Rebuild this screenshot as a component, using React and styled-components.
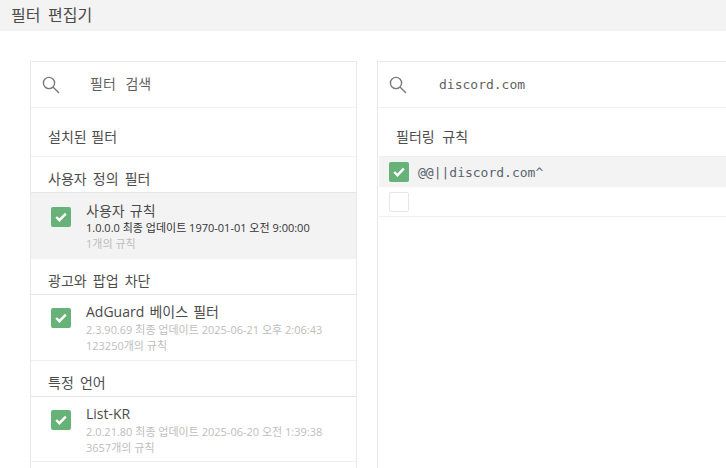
import React from "react";
import styled, { createGlobalStyle } from "styled-components";

const GlobalStyle = createGlobalStyle`
  html, body {
    margin: 0;
    height: 100%;
    overflow: hidden;
    background: #fff;
  }
  body {
    font-family: "Open Sans", "Noto Sans CJK KR", sans-serif;
    color: #4d4d4d;
  }
`;

const Page = styled.div`
  width: 726px;
  height: 468px;
  overflow: hidden;
`;

const Header = styled.div`
  height: 31px;
  background: #f3f3f3;
  padding-left: 11px;
  font-size: 16px;
  line-height: 30px;
  word-spacing: 3.5px;
  color: #4a4a4a;
`;

const Columns = styled.div`
  display: flex;
  gap: 20px;
  padding: 30px 0 0 30px;
`;

const Panel = styled.div`
  flex: none;
  width: ${props => props.width}px;
  height: 420px;
  box-sizing: border-box;
  border: 1px solid #e9e9e9;
  border-right-width: ${props => (props.open ? 0 : 1)}px;
`;

const SearchRow = styled.div`
  display: flex;
  align-items: center;
  height: 45px;
  padding-left: 11px;
  border-bottom: 1px solid #f0f0f0;
`;

const SearchText = styled.span`
  margin-left: ${props => props.offset}px;
  margin-top: ${props => (props.mono ? -1 : -3)}px;
  font-family: ${props =>
    props.mono
      ? '"DejaVu Sans Mono", monospace'
      : '"Open Sans", "Noto Sans CJK KR", sans-serif'};
  font-size: ${props => (props.mono ? 13 : 14)}px;
  word-spacing: ${props => (props.mono ? 0 : 6)}px;
  color: #5f5f5f;
`;

const SectionTitle = styled.div`
  height: 49px;
  box-sizing: border-box;
  padding: 19px 0 0 17px;
  font-size: 14px;
  line-height: 20px;
  word-spacing: 1px;
  border-bottom: 1px solid #f0f0f0;
`;

const GroupTitle = styled.div`
  height: ${props => props.height}px;
  box-sizing: border-box;
  padding: 12px 0 0 17px;
  font-size: 14px;
  line-height: 20px;
  word-spacing: 2.5px;
  border-bottom: 1px solid #e6e6e6;
`;

const FilterItem = styled.div`
  display: flex;
  height: ${props => props.height}px;
  box-sizing: border-box;
  padding: ${props => (props.selected ? 14 : 13)}px 0 0 20px;
  background: ${props => (props.selected ? "#f3f3f3" : "#fff")};
  border-bottom: ${props => (props.selected ? "none" : "1px solid #f0f0f0")};
`;

const Check = styled.span`
  flex: none;
  display: flex;
  align-items: center;
  justify-content: center;
  width: 20px;
  height: 20px;
  box-sizing: border-box;
  border-radius: 2px;
  background: ${props => (props.checked ? "#67b279" : "#fff")};
  border: ${props => (props.checked ? "none" : "1px solid #e6e6e6")};
`;

const ItemBody = styled.div`
  margin-left: 15px;
  margin-top: -6px;
`;

const ItemName = styled.div`
  margin-bottom: ${props => (props.selected ? 0 : 1)}px;
  font-size: 14px;
  line-height: 19px;
  word-spacing: 1.5px;
  color: #4a4a4a;
`;

const ItemMeta = styled.div`
  font-size: 11px;
  line-height: 16px;
  color: ${props => (props.dark ? "#333" : "#bdbdbd")};
`;

const RuleTitle = styled.div`
  height: 48px;
  box-sizing: border-box;
  padding: 19px 0 0 18px;
  font-size: 14px;
  line-height: 20px;
  word-spacing: 4px;
`;

const RuleRow = styled.div`
  display: flex;
  align-items: center;
  gap: 9px;
  height: ${props => props.height}px;
  margin-left: 1px;
  padding-left: 10px;
  background: ${props => (props.selected ? "#f3f3f3" : "#fff")};
  border-top: ${props => (props.selected ? "1px solid #f0f0f0" : "none")};
  border-bottom: ${props => (props.selected ? "none" : "1px solid #f0f0f0")};
`;

const RuleText = styled.span`
  font-family: "DejaVu Sans Mono", monospace;
  font-size: 13px;
  color: #5a6470;
`;

const SearchIcon = () => (
  <svg width="18" height="18" viewBox="0 0 18 18" fill="none" stroke="#7a7a7a">
    <circle cx="7" cy="7" r="5.6" strokeWidth="1.4" />
    <path d="M11 11l6 6" strokeWidth="1.4" />
  </svg>
);

const CheckMark = () => (
  <svg width="12" height="10" viewBox="0 0 12 10" fill="none" stroke="#fff">
    <path d="M1.2 5l3.2 3.2L10.8 1.6" strokeWidth="2.4" />
  </svg>
);

const groups = [
  {
    title: "사용자 정의 필터",
    titleHeight: 36,
    name: "사용자 규칙",
    version: "1.0.0.0 최종 업데이트 1970-01-01 오전 9:00:00",
    count: "1개의 규칙",
    selected: true,
    height: 66,
  },
  {
    title: "광고와 팝업 차단",
    titleHeight: 36,
    name: "AdGuard 베이스 필터",
    version: "2.3.90.69 최종 업데이트 2025-06-21 오후 2:06:43",
    count: "123250개의 규칙",
    height: 66,
  },
  {
    title: "특정 언어",
    titleHeight: 36,
    name: "List-KR",
    version: "2.0.21.80 최종 업데이트 2025-06-20 오전 1:39:38",
    count: "3657개의 규칙",
    height: 65,
  },
];

const App = () => (
  <Page>
    <GlobalStyle />
    <Header>필터 편집기</Header>
    <Columns>
      <Panel width={327}>
        <SearchRow>
          <SearchIcon />
          <SearchText offset={30}>필터 검색</SearchText>
        </SearchRow>
        <SectionTitle>설치된 필터</SectionTitle>
        {groups.map(group => (
          <React.Fragment key={group.title}>
            <GroupTitle height={group.titleHeight}>{group.title}</GroupTitle>
            <FilterItem height={group.height} selected={group.selected}>
              <Check checked>
                <CheckMark />
              </Check>
              <ItemBody>
                <ItemName selected={group.selected}>{group.name}</ItemName>
                <ItemMeta dark={group.selected}>{group.version}</ItemMeta>
                <ItemMeta>{group.count}</ItemMeta>
              </ItemBody>
            </FilterItem>
          </React.Fragment>
        ))}
      </Panel>
      <Panel width={349} open>
        <SearchRow>
          <SearchIcon />
          <SearchText offset={32} mono>
            discord.com
          </SearchText>
        </SearchRow>
        <RuleTitle>필터링 규칙</RuleTitle>
        <RuleRow height={30} selected>
          <Check checked>
            <CheckMark />
          </Check>
          <RuleText>@@||discord.com^</RuleText>
        </RuleRow>
        <RuleRow height={29}>
          <Check />
        </RuleRow>
      </Panel>
    </Columns>
  </Page>
);

export default App;
